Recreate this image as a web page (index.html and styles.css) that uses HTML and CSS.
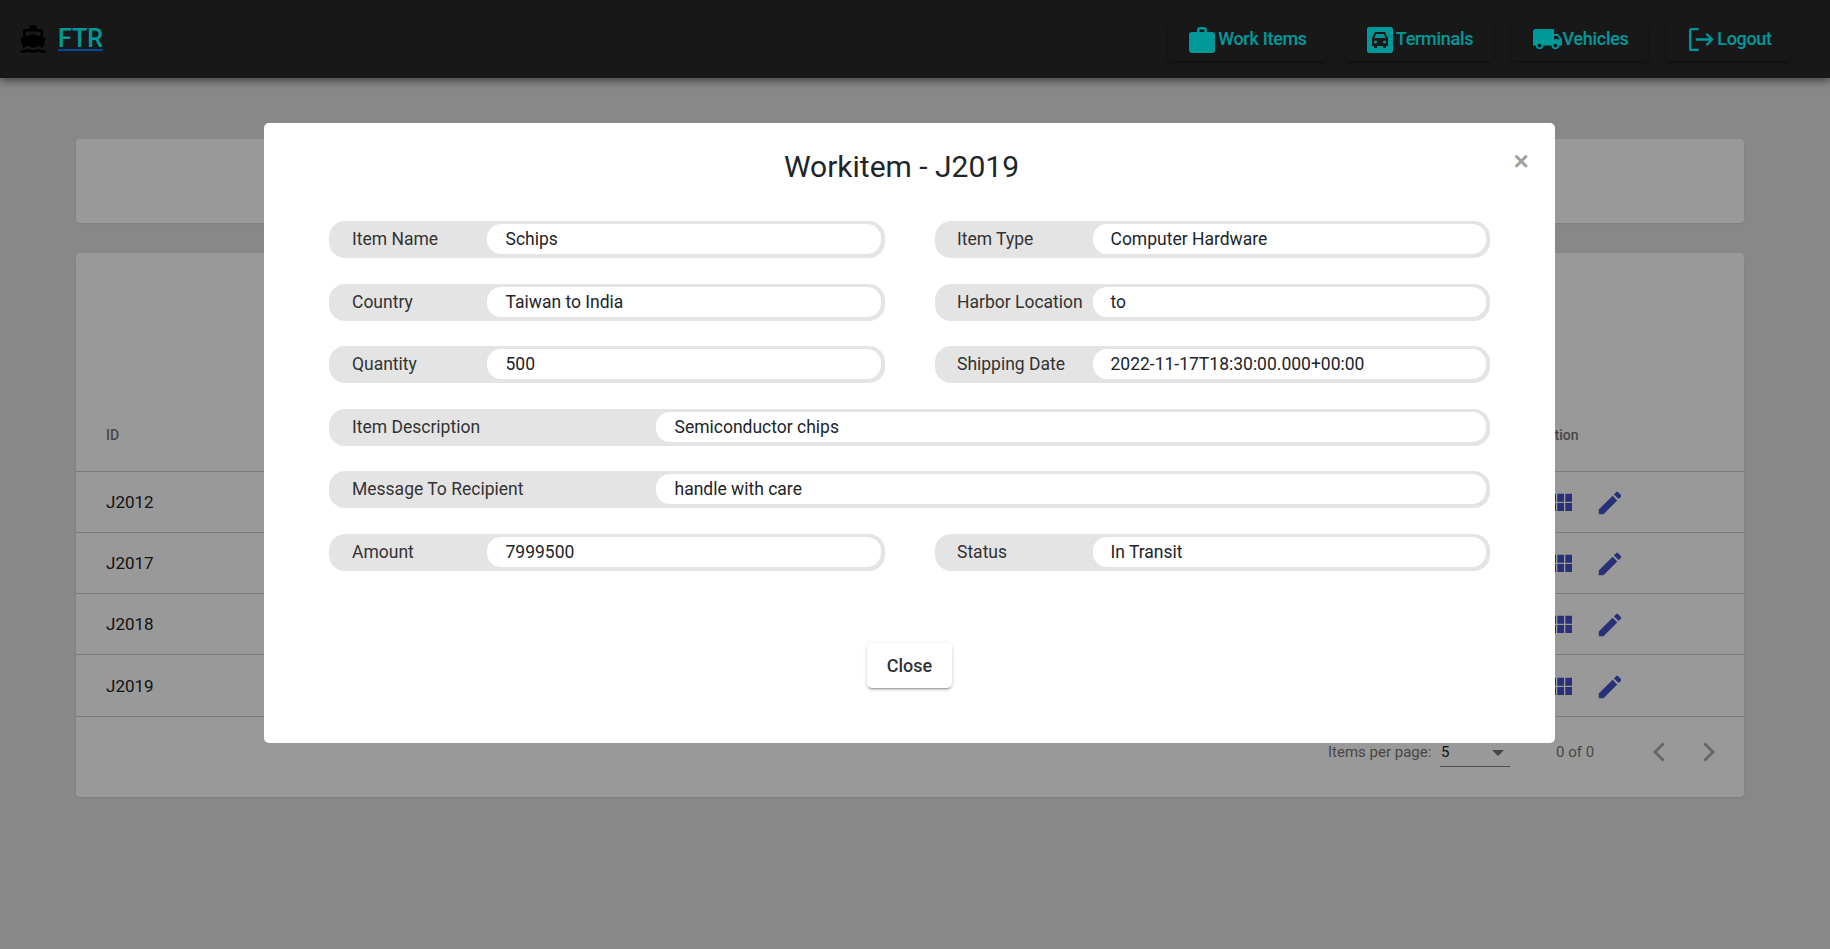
FILE: index.html
```html
<!DOCTYPE html>
<html lang="en">
<head>
    <meta charset="UTF-8">
    <meta name="viewport" content="width=device-width, initial-scale=1.0">
    <title>FTR | Work Items</title>
    <link rel="stylesheet" href="styles.css">
</head>
<body>

    <!-- Top navbar -->
    <nav class="navbar">
        <div class="brand">
            <svg class="brand-icon" viewBox="0 0 24 24"><path d="M20 21c-1.39 0-2.78-.47-4-1.32-2.44 1.71-5.56 1.71-8 0C6.78 20.53 5.39 21 4 21H2v2h2c1.38 0 2.74-.35 4-.99 2.52 1.29 5.48 1.29 8 0 1.26.65 2.62.99 4 .99h2v-2h-2zM3.95 19H4c1.6 0 3.02-.88 4-2 .98 1.12 2.4 2 4 2s3.02-.88 4-2c.98 1.12 2.4 2 4 2h.05l1.89-6.68c.08-.26.06-.54-.06-.78s-.34-.42-.6-.5L20 10.62V6c0-1.1-.9-2-2-2h-3V1H9v3H6c-1.1 0-2 .9-2 2v4.62l-1.29.42c-.26.08-.48.26-.6.5s-.15.52-.06.78L3.95 19zM6 6h12v3.97L12 8 6 9.97V6z"/></svg>
            <a class="brand-link" href="#">FTR</a>
        </div>
        <div class="nav-links">
            <a class="nav-btn nav-work" href="#">
                <svg class="nav-icon" viewBox="0 0 26 26"><path d="M8 5V3a3 3 0 0 1 3-3h4a3 3 0 0 1 3 3v2h5a3 3 0 0 1 3 3v15a3 3 0 0 1-3 3H3a3 3 0 0 1-3-3V8a3 3 0 0 1 3-3zm2.500 0h5V3a.6.6 0 0 0-.6-.6h-3.800a.6.6 0 0 0-.6.6z"/></svg>
                Work Items
            </a>
            <a class="nav-btn nav-terminals" href="#">
                <svg class="nav-icon" viewBox="0 0 26 26"><path fill-rule="evenodd" d="M2 0h22a2 2 0 0 1 2 2v22a2 2 0 0 1-2 2H2a2 2 0 0 1-2-2V2a2 2 0 0 1 2-2zm6 5L5 11v8h2v2h3v-2h6v2h3v-2h2v-8l-3-6zm1.300 2h7.400l2 4H7.300zM8.500 13.500a1.500 1.500 0 1 1 0 3 1.500 1.500 0 0 1 0-3zm9 0a1.500 1.500 0 1 1 0 3 1.500 1.500 0 0 1 0-3z"/></svg>
                Terminals
            </a>
            <a class="nav-btn nav-vehicles" href="#">
                <svg class="nav-icon truck" viewBox="1 4 22 16.500" preserveAspectRatio="none"><path d="M20 8h-3V4H3c-1.100 0-2 .9-2 2v11h2c0 1.660 1.340 3 3 3s3-1.340 3-3h6c0 1.660 1.340 3 3 3s3-1.340 3-3h2v-5l-3-4zM6 18.500c-.83 0-1.500-.67-1.500-1.500s.67-1.500 1.500-1.500 1.500.67 1.500 1.500-.67 1.500-1.500 1.500zm13.500-9l1.960 2.500H17V9.500h2.500zm-1.500 9c-.83 0-1.500-.67-1.500-1.500s.67-1.500 1.500-1.500 1.500.67 1.500 1.500-.67 1.500-1.500 1.500z"/></svg>
                Vehicles
            </a>
            <a class="nav-btn nav-logout" href="#">
                <svg class="nav-icon" viewBox="0 0 26 24" fill="none" stroke="currentColor" stroke-width="2.400"><path d="M10 1.200H2.700a1.500 1.500 0 0 0-1.500 1.500v18.600a1.500 1.500 0 0 0 1.500 1.500H10"/><path d="M7 12h17M18 6l6 6-6 6"/></svg>
                Logout
            </a>
        </div>
    </nav>

    <!-- Page behind the dialog -->
    <main class="page">
        <section class="card card-filter"></section>

        <section class="card card-table">
            <div class="row-head">
                <div class="cell-id">ID</div>
                <div class="cell-action">Action</div>
            </div>
            <div class="row">
                <div class="cell-id">J2012</div>
                <div class="cell-action"><svg class="grid-icon" viewBox="0 0 24 24"><path d="M4 11h5V5H4v6zm0 7h5v-6H4v6zm6 0h5v-6h-5v6zm6 0h5v-6h-5v6zm-6-7h5V5h-5v6zm6-6v6h5V5h-5z"/></svg><svg class="edit-icon" viewBox="0 0 24 24"><path d="M3 17.250V21h3.750L17.810 9.940l-3.750-3.750L3 17.250zM20.710 7.040c.39-.39.39-1.020 0-1.410l-2.340-2.340c-.39-.39-1.020-.39-1.410 0l-1.830 1.830 3.750 3.750 1.830-1.830z"/></svg></div>
            </div>
            <div class="row">
                <div class="cell-id">J2017</div>
                <div class="cell-action"><svg class="grid-icon" viewBox="0 0 24 24"><path d="M4 11h5V5H4v6zm0 7h5v-6H4v6zm6 0h5v-6h-5v6zm6 0h5v-6h-5v6zm-6-7h5V5h-5v6zm6-6v6h5V5h-5z"/></svg><svg class="edit-icon" viewBox="0 0 24 24"><path d="M3 17.250V21h3.750L17.810 9.940l-3.750-3.750L3 17.250zM20.710 7.040c.39-.39.39-1.020 0-1.410l-2.340-2.340c-.39-.39-1.020-.39-1.410 0l-1.830 1.830 3.750 3.750 1.830-1.830z"/></svg></div>
            </div>
            <div class="row">
                <div class="cell-id">J2018</div>
                <div class="cell-action"><svg class="grid-icon" viewBox="0 0 24 24"><path d="M4 11h5V5H4v6zm0 7h5v-6H4v6zm6 0h5v-6h-5v6zm6 0h5v-6h-5v6zm-6-7h5V5h-5v6zm6-6v6h5V5h-5z"/></svg><svg class="edit-icon" viewBox="0 0 24 24"><path d="M3 17.250V21h3.750L17.810 9.940l-3.750-3.750L3 17.250zM20.710 7.040c.39-.39.39-1.020 0-1.410l-2.340-2.340c-.39-.39-1.020-.39-1.410 0l-1.830 1.830 3.750 3.750 1.830-1.830z"/></svg></div>
            </div>
            <div class="row row-last">
                <div class="cell-id">J2019</div>
                <div class="cell-action"><svg class="grid-icon" viewBox="0 0 24 24"><path d="M4 11h5V5H4v6zm0 7h5v-6H4v6zm6 0h5v-6h-5v6zm6 0h5v-6h-5v6zm-6-7h5V5h-5v6zm6-6v6h5V5h-5z"/></svg><svg class="edit-icon" viewBox="0 0 24 24"><path d="M3 17.250V21h3.750L17.810 9.940l-3.750-3.750L3 17.250zM20.710 7.040c.39-.39.39-1.020 0-1.410l-2.340-2.340c-.39-.39-1.020-.39-1.410 0l-1.830 1.830 3.750 3.750 1.830-1.830z"/></svg></div>
            </div>

            <div class="paginator">
                <span class="page-label">Items per page:</span>
                <div class="page-select">
                    <span>5</span>
                    <i class="select-arrow"></i>
                </div>
                <span class="page-range">0 of 0</span>
                <svg class="page-arrow" viewBox="0 0 12 20"><path d="M10.500 1.500L2 10l8.500 8.500" /></svg>
                <svg class="page-arrow" viewBox="0 0 12 20"><path d="M1.500 1.500L10 10l-8.500 8.500" /></svg>
            </div>
        </section>
    </main>

    <!-- Dialog -->
    <div class="backdrop"></div>
    <div class="dialog-wrap">
        <div class="dialog">
            <button class="dialog-x">&times;</button>
            <h2 class="dialog-title">Workitem - J2019</h2>

            <div class="form-grid">
                <div class="field">
                    <label>Item Name</label>
                    <div class="value">Schips</div>
                </div>
                <div class="field field-right">
                    <label>Item Type</label>
                    <div class="value">Computer Hardware</div>
                </div>
                <div class="field">
                    <label>Country</label>
                    <div class="value">Taiwan to India</div>
                </div>
                <div class="field field-right">
                    <label>Harbor Location</label>
                    <div class="value">to</div>
                </div>
                <div class="field">
                    <label>Quantity</label>
                    <div class="value">500</div>
                </div>
                <div class="field field-right">
                    <label>Shipping Date</label>
                    <div class="value">2022-11-17T18:30:00.000+00:00</div>
                </div>
                <div class="field field-wide">
                    <label>Item Description</label>
                    <div class="value">Semiconductor chips</div>
                </div>
                <div class="field field-wide">
                    <label>Message To Recipient</label>
                    <div class="value">handle with care</div>
                </div>
                <div class="field">
                    <label>Amount</label>
                    <div class="value">7999500</div>
                </div>
                <div class="field field-right">
                    <label>Status</label>
                    <div class="value">In Transit</div>
                </div>
            </div>

            <div class="dialog-actions">
                <button class="close-btn">Close</button>
            </div>
        </div>
    </div>

</body>
</html>
```

FILE: styles.css
```css
* { margin: 0; padding: 0; box-sizing: border-box; }

body {
    font-family: Roboto, "Liberation Sans", sans-serif;
    background: #e3e3e3;
    height: 949px;
    overflow: hidden;
}

/* Navbar */
.navbar {
    height: 78px;
    background: #282828;
    display: flex;
    align-items: center;
    justify-content: space-between;
    padding: 0 39px 0 18px;
    box-shadow: 0 3px 8px rgba(0, 0, 0, 0.5);
    position: relative;
}

.brand {
    display: flex;
    align-items: center;
    gap: 10px;
}

.brand-icon {
    width: 30px;
    height: 30px;
    fill: #000;
}

.brand-link {
    font-size: 25px;
    font-weight: 500;
    color: #00ffff;
    text-decoration: underline;
    text-decoration-color: #007bff;
    line-height: 30px;
}

.nav-links {
    display: flex;
    gap: 18px;
    margin-top: 3px;
}

.nav-btn {
    height: 41px;
    display: flex;
    align-items: center;
    justify-content: center;
    gap: 3px;
    padding-bottom: 5px;
    color: #00ffff;
    font-size: 18px;
    font-weight: 500;
    letter-spacing: -0.3px;
    text-decoration: none;
    border-radius: 4px;
    background: #282828;
    box-shadow: 0 2px 3px rgba(0, 0, 0, 0.25);
}

.nav-work { width: 159px; padding-left: 1px; }
.nav-terminals { width: 148px; padding-left: 2px; }
.nav-vehicles { width: 137px; gap: 1px; padding-left: 2px; }
.nav-logout { width: 125px; padding-left: 4px; }

.nav-icon {
    width: 26px;
    height: 26px;
    fill: #00ffff;
    margin-top: 3px;
}

.nav-icon.truck { width: 29px; height: 21px; }

.nav-logout .nav-icon { fill: none; width: 25px; height: 23px; }

/* Page */
.page {
    padding: 61px 86px 0 76px;
}

.card {
    background: #fff;
    border-radius: 4px;
    box-shadow: 0 1px 2px rgba(0, 0, 0, 0.08);
}

.card-filter {
    height: 84px;
    margin-bottom: 30px;
}

.card-table {
    height: 544px;
}

.row-head {
    height: 218px;
    display: flex;
    align-items: flex-end;
    padding: 0 0 27px 30px;
    font-size: 14px;
    font-weight: 500;
    line-height: 18px;
    color: #777;
}

.row {
    height: 61px;
    display: flex;
    align-items: center;
    padding-left: 30px;
    border-top: 1px solid #d0d0d0;
    font-size: 17px;
    color: #222;
}

.row-last { height: 62px; }

.cell-id { flex: 1; }

.cell-action {
    width: 206px;
    display: flex;
    align-items: center;
}

.row-head .cell-action { display: block; }

.grid-icon {
    width: 32px;
    height: 32px;
    fill: #4353c8;
    margin: 2px 0 0 6px;
}

.edit-icon {
    width: 30px;
    height: 30px;
    fill: #4353c8;
    margin: 2px 0 0 19px;
}

.paginator {
    height: 81px;
    border-top: 1px solid #d0d0d0;
    display: flex;
    align-items: flex-start;
    padding: 26px 0 0 1252px;
    font-size: 15px;
    color: #777;
}

.paginator > * { flex-shrink: 0; }

.page-label { width: 112px; }

.page-select {
    width: 70px;
    height: 24px;
    border-bottom: 1px solid #888;
    position: relative;
    color: #222;
    padding-left: 1px;
}

.select-arrow {
    position: absolute;
    right: 6px;
    top: 7px;
    border-left: 6px solid transparent;
    border-right: 6px solid transparent;
    border-top: 6px solid #777;
}

.page-range {
    margin-left: 46px;
    width: 97px;
}

.page-arrow {
    width: 12px;
    height: 20px;
    fill: none;
    stroke: #aaa;
    stroke-width: 3;
    margin-right: 38px;
    margin-top: -1px;
}

/* Dialog */
.backdrop {
    position: fixed;
    inset: 0;
    background: rgba(0, 0, 0, 0.4);
}

.dialog-wrap {
    position: fixed;
    inset: 0;
    padding: 123px 275px 0 264px;
}

.dialog {
    height: 620px;
    background: #fff;
    border-radius: 5px;
    padding: 24px 65px 0;
    position: relative;
}

.dialog-x {
    position: absolute;
    top: 20px;
    right: 24px;
    width: 20px;
    height: 36px;
    border: none;
    background: none;
    color: #a0a0a0;
    font-family: "Liberation Sans", sans-serif;
    font-size: 26px;
    font-weight: 700;
}

.dialog-title {
    font-size: 30px;
    font-weight: 400;
    line-height: 40px;
    text-align: center;
    color: #212529;
    padding-right: 16px;
    height: 74px;
}

.form-grid {
    display: grid;
    grid-template-columns: 1fr 1fr;
    column-gap: 50px;
    row-gap: 25.500px;
}

.field {
    height: 37px;
    display: flex;
    background: #e4e4e4;
    border-radius: 16px;
    font-size: 17.500px;
    color: #333;
}

.field-wide { grid-column: span 2; }

.field label {
    width: 158px;
    padding-left: 23px;
    line-height: 36px;
    flex-shrink: 0;
}

.field-wide label { width: 327px; }

.value {
    flex: 1;
    background: #fff;
    margin: 3px 4px 4px 0;
    border-radius: 14px;
    padding-left: 18.500px;
    line-height: 30px;
    color: #212529;
}

.field-right label { padding-left: 22.500px; }

.field-right .value { padding-left: 18px; }

.dialog-actions {
    display: flex;
    justify-content: center;
    margin-top: 72px;
}

.close-btn {
    width: 85px;
    height: 45px;
    background: #fff;
    border: none;
    border-radius: 5px;
    font-family: Roboto, sans-serif;
    font-size: 18px;
    font-weight: 500;
    color: #333;
    box-shadow: 0 3px 1px -2px rgba(0,0,0,.2), 0 2px 2px 0 rgba(0,0,0,.14), 0 1px 5px 0 rgba(0,0,0,.12);
}
```
